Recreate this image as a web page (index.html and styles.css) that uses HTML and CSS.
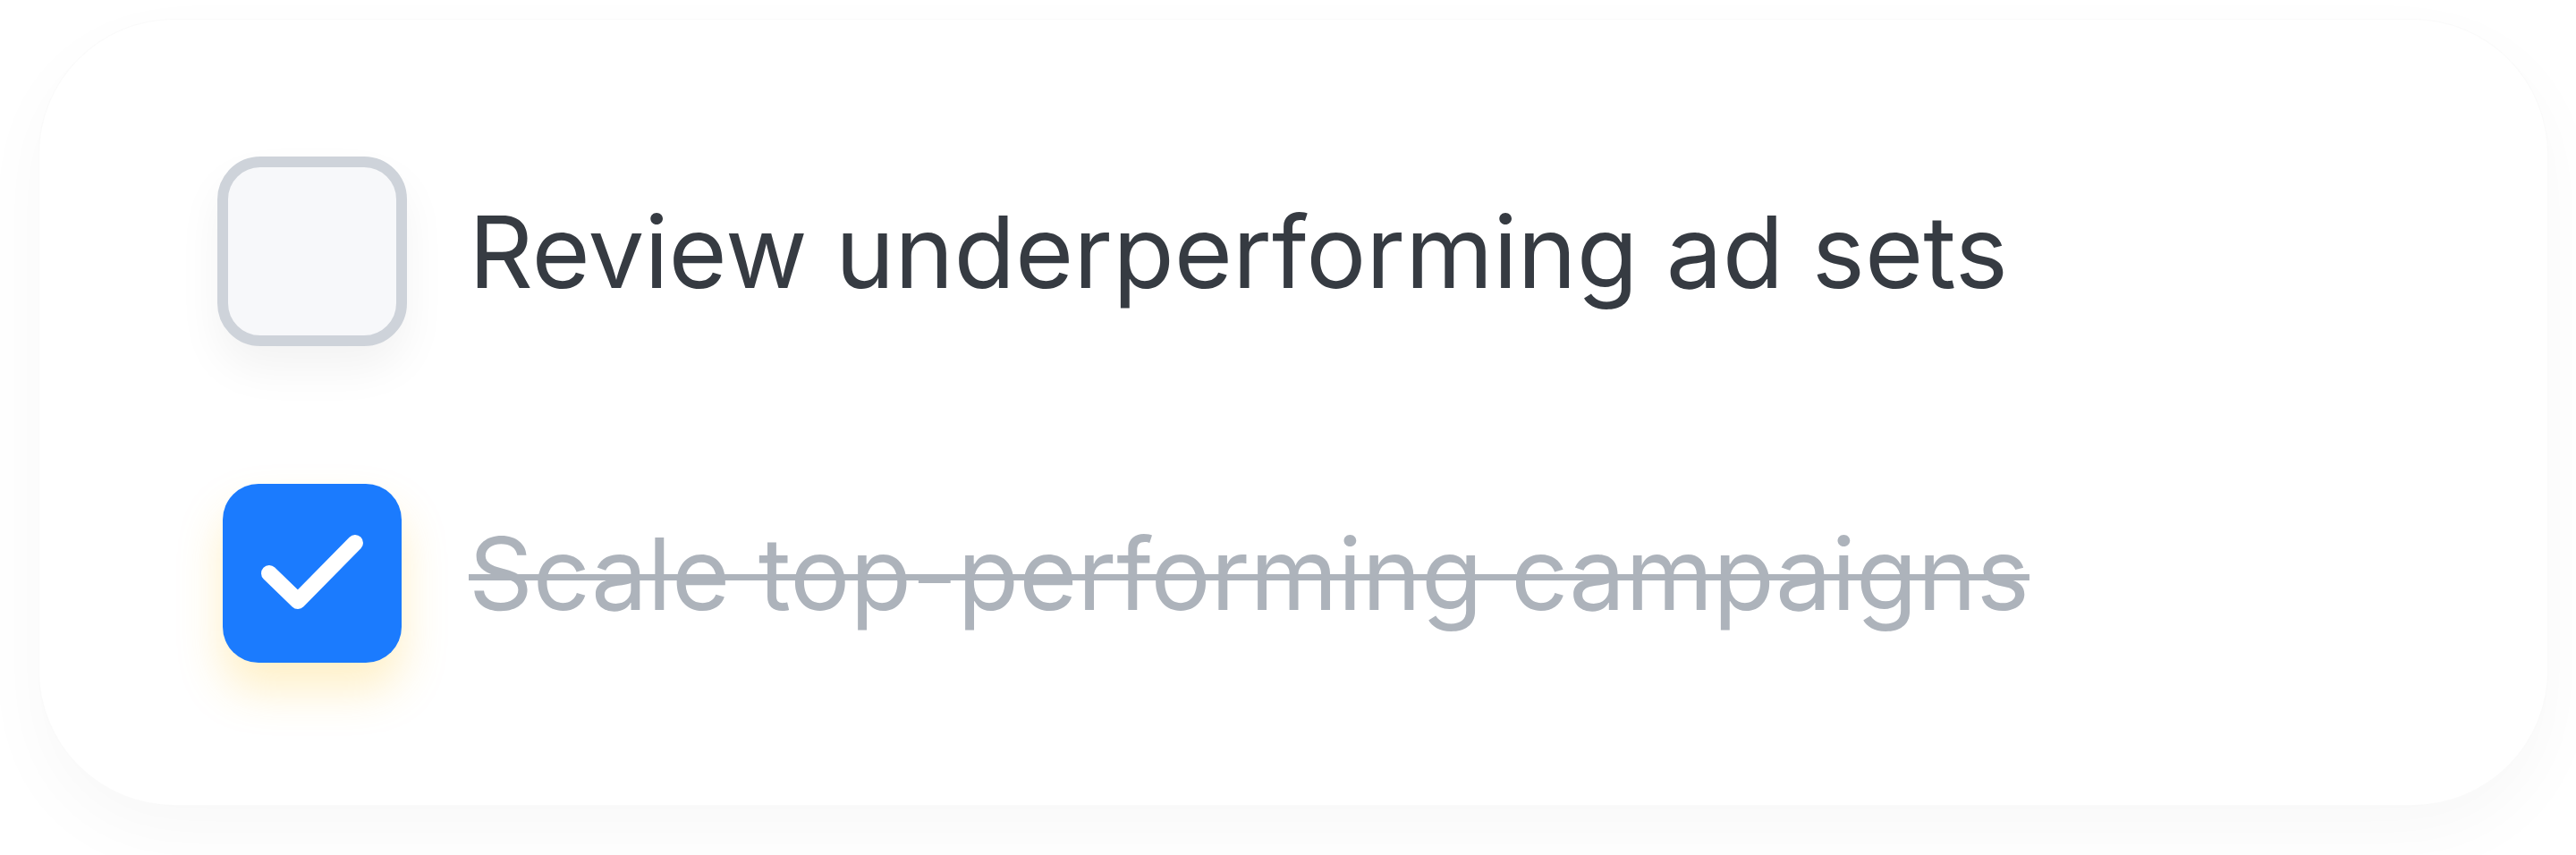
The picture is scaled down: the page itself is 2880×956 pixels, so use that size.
FILE: index.html
```html
<!DOCTYPE html>
<html lang="en">
<head>
<meta charset="utf-8">
<title>Tasks</title>
<link rel="stylesheet" href="styles.css">
</head>
<body>
<div class="card">
  <div class="row">
    <div class="slot">
      <div class="check check--off"></div>
    </div>
    <span class="label">Review underperforming ad sets</span>
  </div>
  <div class="row">
    <div class="slot">
      <div class="check check--on">
        <svg class="tick" viewBox="0 0 200 200" width="200" height="200" aria-hidden="true">
          <polyline points="52,100 84,131 148,66" fill="none" stroke="#ffffff" stroke-width="18" stroke-linecap="round" stroke-linejoin="round"/>
        </svg>
      </div>
    </div>
    <span class="label label--done">Scale top-performing campaigns</span>
  </div>
</div>
</body>
</html>
```

FILE: styles.css
```css
html, body {
  margin: 0;
  padding: 0;
  background: #ffffff;
}

body {
  width: 2880px;
  height: 956px;
  overflow: hidden;
  font-family: "Inter", "Noto Sans", sans-serif;
}

.card {
  box-sizing: border-box;
  margin: 21px 0 0 43px;
  width: 2806px;
  height: 880px;
  background: #ffffff;
  border-radius: 152px;
  border: 1px solid rgba(0, 0, 0, 0.02);
  box-shadow: 0 30px 80px rgba(0, 0, 0, 0.03);
  padding: 159px 0 159px 205px;
  display: flex;
  flex-direction: column;
  gap: 160px;
}

.row {
  display: flex;
  align-items: center;
  gap: 75px;
  height: 200px;
}

.slot {
  width: 200px;
  height: 200px;
  flex: none;
  display: flex;
  align-items: center;
  justify-content: center;
}

.check {
  flex: none;
  box-sizing: border-box;
}

.check--off {
  width: 212px;
  height: 212px;
  border: 12px solid #ced3da;
  background: #f7f8fa;
  border-radius: 48px;
  box-shadow: 0 26px 50px rgba(0, 0, 0, 0.05);
}

.check--on {
  width: 200px;
  height: 200px;
  background: #1b7bfe;
  border-radius: 40px;
  box-shadow: 0 30px 50px rgba(255, 196, 40, 0.26);
}

.tick {
  display: block;
}

.label {
  font-size: 112px;
  line-height: 1;
  font-weight: 400;
  color: #363b42;
  white-space: nowrap;
}

.label--done {
  color: #adb3bb;
  text-decoration: line-through;
  text-decoration-thickness: 7px;
}
```
